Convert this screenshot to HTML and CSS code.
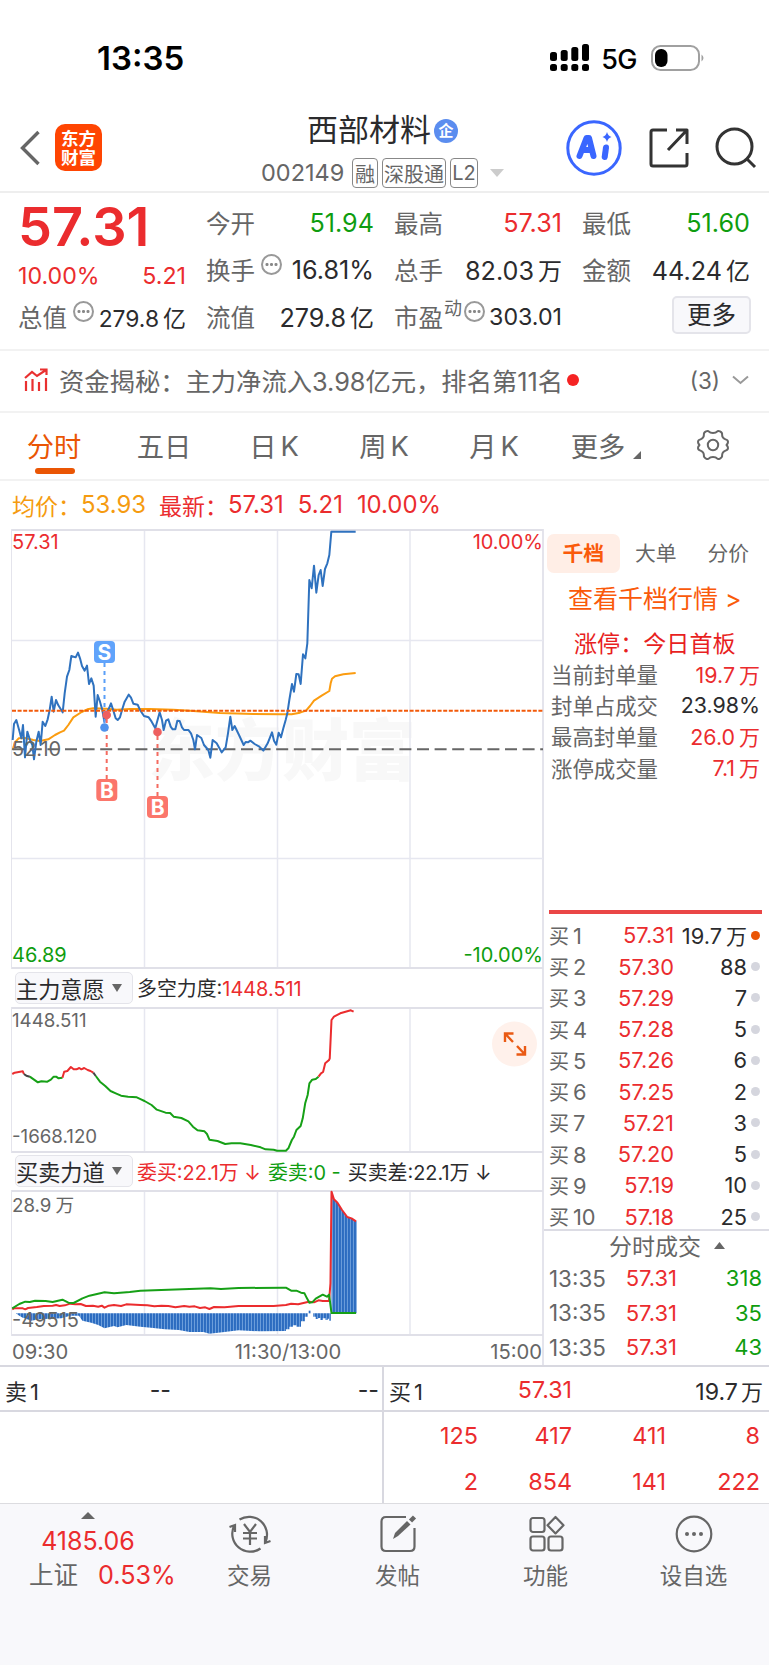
FILE: index.html
```html
<!DOCTYPE html>
<html lang="zh-CN">
<head>
    <meta charset="UTF-8">
    <meta name="viewport" content="width=device-width, initial-scale=1.0">
    <title>西部材料 002149</title>
    <link rel="stylesheet" href="styles.css">
</head>
<body>
    <div class="status-bar">
        <span class="time">13:35</span>
        <div class="status-icons">
            <svg class="signal" width="40" height="28" viewBox="0 0 40 28">
                <rect x="0" y="8" width="7" height="9" rx="2.5"/><rect x="10.7" y="6" width="7" height="11" rx="2.5"/>
                <rect x="21.3" y="3" width="7" height="14" rx="2.5"/><rect x="32" y="0" width="7" height="17" rx="2.5"/>
                <rect x="0" y="20" width="7" height="7" rx="2.5"/><rect x="10.7" y="20" width="7" height="7" rx="2.5"/>
                <rect x="21.3" y="20" width="7" height="7" rx="2.5"/><rect x="32" y="20" width="7" height="7" rx="2.5"/>
            </svg>
            <span class="network">5G</span>
            <svg width="54" height="26" viewBox="0 0 54 26">
                <rect x="1" y="1" width="47" height="24" rx="8.5" fill="none" stroke="#a0a0a0" stroke-width="2"/>
                <rect x="4" y="4" width="12.5" height="18" rx="6"/>
                <path d="M50.5 9.5q4 3.5 0 7z" fill="#a0a0a0"/>
            </svg>
        </div>
    </div>

    <header class="header">
        <svg class="back" width="20" height="36" viewBox="0 0 20 36"><path d="M18.500 2L2.500 18l16 16" fill="none" stroke="#666" stroke-width="3.400"/></svg>
        <div class="logo"><span>东方</span><span>财富</span></div>
        <div class="stock">
            <div class="stock-name">西部材料<span class="badge">企</span></div>
            <div class="stock-code">
                <span class="code">002149</span>
                <span class="tag">融</span><span class="tag tag-wide">深股通</span><span class="tag tag-l2">L2</span>
                <svg width="14" height="8" viewBox="0 0 14 8"><path d="M0 0h14L7 8z" fill="#ccc"/></svg>
            </div>
        </div>
        <div class="header-actions">
            <svg width="56" height="56" viewBox="0 0 56 56">
                <circle cx="28" cy="28" r="26.200" fill="none" stroke="#3a66ff" stroke-width="3"/>
                <g fill="none" stroke="#3a66ff" stroke-linecap="round" stroke-linejoin="round" stroke-width="6">
                    <path d="M13.500 36L20.500 18h2.500L27.500 36M17.500 30h8"/>
                    <path d="M40 27.500l-1.300 9.500"/>
                </g>
                <path d="M41 12q1 4 4.500 5Q42 18 41 22q-1-4-4.500-5Q40 16 41 12z" fill="#3a66ff"/>
            </svg>
            <svg class="share" width="40" height="40" viewBox="0 0 40 40" fill="none" stroke="#333" stroke-width="3" stroke-linejoin="round">
                <path d="M18 2H4Q2 2 2 4v32q0 2 2 2h32q2 0 2-2V25"/><path d="M27 2h11v14M38 2L19 22"/>
            </svg>
            <svg class="search" width="42" height="42" viewBox="0 0 42 42" fill="none" stroke="#333" stroke-width="3">
                <circle cx="19.500" cy="19.500" r="17.500"/><path d="M32 32l8 8"/>
            </svg>
        </div>
    </header>

    <section class="quote">
        <div class="quote-col">
            <div class="price red">57.31</div>
            <div class="cell small red"><span class="change">10.00%</span><span>5.21</span></div>
            <div class="cell small total"><label>总值</label><i class="info"></i><span class="value">279.8<b>亿</b></span></div>
        </div>
        <div class="quote-col">
            <div class="cell"><label>今开</label><span class="value green">51.94</span></div>
            <div class="cell"><label>换手</label><i class="info"></i><span class="value">16.81%</span></div>
            <div class="cell"><label>流值</label><span class="value">279.8<b>亿</b></span></div>
        </div>
        <div class="quote-col">
            <div class="cell"><label>最高</label><span class="value red">57.31</span></div>
            <div class="cell"><label>总手</label><span class="value">82.03<b>万</b></span></div>
            <div class="cell small pe"><label>市盈</label><sup>动</sup><i class="info"></i><span class="value">303.01</span></div>
        </div>
        <div class="quote-col">
            <div class="cell"><label>最低</label><span class="value green">51.60</span></div>
            <div class="cell"><label>金额</label><span class="value">44.24<b>亿</b></span></div>
            <div class="cell"><button class="more-btn">更多</button></div>
        </div>
    </section>

    <section class="news">
        <svg width="24" height="24" viewBox="0 0 24 24" fill="none" stroke="#e93030" stroke-width="2.200">
            <path d="M1 10L8 4l5 4 9-6M16 1.500h6.500V7M2 13v10M8.500 11v12M15 14v9M22 10v13"/>
        </svg>
        <span class="news-text">资金揭秘：主力净流入3.98亿元，排名第11名</span>
        <span class="red-dot"></span>
        <span class="news-count">(3)</span>
        <svg width="17" height="10" viewBox="0 0 17 10"><path d="M1 1.500l7.500 6.500L16 1.500" fill="none" stroke="#999" stroke-width="2"/></svg>
    </section>

    <nav class="tabs">
        <span class="tab active">分时</span>
        <span class="tab">五日</span>
        <span class="tab">日<em>K</em></span>
        <span class="tab">周<em>K</em></span>
        <span class="tab">月<em>K</em></span>
        <span class="tab tab-more">更多<svg width="8" height="8" viewBox="0 0 8 8"><path d="M8 0v8H0z" fill="#666"/></svg></span>
        <svg class="gear" width="34" height="32" viewBox="0 0 34 32" fill="none" stroke="#666" stroke-width="2" stroke-linejoin="round">
            <path d="M17 4Q20 4 21 2.600 22 1.400 24 2.400 26.400 3.600 26.100 5.500 26 9 29.500 10.400 32 11 32 13 32 14.500 30.500 16 32 17.500 32 19 32 21 29.500 21.600 26 23 26.100 26.500 26.400 28.400 24 29.600 22 30.600 21 29.400 20 28 17 28 14 28 13 29.400 12 30.600 10 29.600 7.600 28.400 7.900 26.500 8 23 4.500 21.600 2 21 2 19 2 17.500 3.500 16 2 14.500 2 13 2 11 4.500 10.400 8 9 7.900 5.500 7.600 3.600 10 2.400 12 1.400 13 2.600 14 4 17 4z"/>
            <circle cx="17" cy="16" r="5.200"/>
        </svg>
    </nav>

    <div class="legend">
        <span class="orange">均价：</span><span class="num orange avg">53.93</span>
        <span class="red">最新：</span><span class="num red last">57.31</span><span class="num red diff">5.21</span><span class="num red">10.00%</span>
    </div>

    <main class="board">
        <div class="charts">
            <svg class="chart" width="531" height="436" viewBox="0 2 531 436">
                <text class="watermark" x="136" y="246">东方财富</text>
                <path class="grid" d="M132.500 2v436M265.500 2v436M398 2v436M0 111.500h531M0 329.500h531"/>
                <g transform="translate(-12 -9) scale(.33333)">
                    <polyline class="line orange-line" points="38,690 44,668 56,655 75,654 100,660 120,663 145,658 165,645 180,637 192,632 205,615 220,592 245,576 262,568 280,565 320,566 350,569 390,567 450,567 520,569 570,572 610,575 660,579 760,582 840,583 875,583 900,578 918,572 930,558 942,542 965,527 988,513 992,490 996,476 1005,469 1030,463 1067,459"/>
                </g>
                <path d="M0.200 220.300H531" stroke="#666" stroke-width="2" stroke-dasharray="12 5.600"/>
                <g transform="translate(-12 -9) scale(.33333)">
                    <polyline class="line blue-line" points="38,660 42,612 49,600 58,632 64,655 69,615 75,712 82,635 90,660 97,675 102,718 109,665 116,635 122,675 128,605 136,618 143,598 149,570 155,530 161,575 168,540 175,556 188,577 194,520 201,470 208,450 214,408 227,412 234,398 240,415 246,438 254,452 261,437 267,492 274,475 281,497 287,590 293,525 300,545 307,570 313,605 320,577 327,565 333,550 341,575 347,595 353,600 360,592 367,567 374,545 386,524 393,533 400,551 413,554 420,570 432,588 446,592 455,605 466,625 479,577 486,600 491,630 498,602 505,598 512,620 518,628 526,628 532,602 539,603 546,622 552,630 565,630 573,640 580,660 585,688 591,645 604,654 612,675 625,690 631,713 638,660 650,670 665,697 677,682 684,640 691,590 697,630 704,618 717,645 731,675 737,666 744,667 751,662 764,672 778,680 790,692 803,670 816,637 822,662 829,674 836,638 843,652 850,625 857,600 862,580 868,540 876,492 882,515 889,462 896,463 902,492 909,403 916,415 922,370 928,180 935,205 942,137 949,218 956,165 962,150 968,198 975,147 982,130 988,105 994,35 1067,35"/>
                </g>
                <path d="M0 181.700h531" stroke="#f25a0a" stroke-width="2" stroke-dasharray="4 1.600"/>
                <!-- buy / sell markers -->
                <path d="M92.500 134v62" stroke="#5a9ff8" stroke-width="2" stroke-dasharray="4 4"/>
                <path d="M94.700 190v60M145.500 207v60" stroke="#f46b60" stroke-width="2" stroke-dasharray="4 4"/>
                <circle cx="92.500" cy="198.500" r="4.300" fill="#4f93ee"/>
                <circle cx="94.700" cy="186" r="4.300" fill="#ee5f5f"/>
                <circle cx="145.500" cy="203" r="4.300" fill="#ee5f5f"/>
                <rect x="82" y="112" width="21" height="22" rx="4" fill="#60a3fb"/>
                <rect x="84.300" y="250" width="21" height="22" rx="4" fill="#fb766b"/>
                <rect x="135" y="267" width="21" height="22" rx="4" fill="#fb766b"/>
                <text class="mark" x="92.500" y="130.500">S</text>
                <text class="mark" x="94.900" y="268.500">B</text>
                <text class="mark" x="145.600" y="285.500">B</text>
                <text class="label fill-red" x="0" y="20">57.31</text>
                <text class="label fill-red" x="531" y="20" text-anchor="end">10.00%</text>
                <text class="label" x="0" y="227">52.10</text>
                <text class="label fill-green" x="0" y="433">46.89</text>
                <text class="label fill-green" x="531" y="433" text-anchor="end">-10.00%</text>
            </svg>

            <div class="chart-bar">
                <button class="select">主力意愿<i></i></button>
                <span>多空力度:<span class="red">1448.511</span></span>
            </div>
            <svg class="chart" width="531" height="142" viewBox="0 2 531 142">
                <path class="grid" d="M132.500 2v142M265.500 2v142M398 2v142"/>
                <g transform="translate(-12 -67) scale(.3508 .33333)">
                    <polyline class="line red-line" points="35,402 42,398 65,394 68,402"/>
                    <polyline class="line dark-line" points="68,402 75,407 85,410"/>
                    <polyline class="line green-line" points="85,410 97,419 108,427 118,424 135,425 145,419 153,410 160,410 167,415 178,413"/>
                    <polyline class="line red-line" points="178,413 183,395 192,393 202,381 210,388 218,388 226,384 232,388 240,384 250,390 258,393 266,398"/>
                    <polyline class="line dark-line" points="266,398 273,408"/>
                    <polyline class="line green-line" points="273,408 285,425 300,438 315,453 330,460 345,467 365,470 390,472 402,478 412,483 432,495 447,509 472,518 485,519 495,530 517,534 537,544 550,560 563,571 583,574 590,582 597,599 620,603 642,612 660,610 685,610 715,615 743,622 757,628 780,629 790,632 815,632 822,625 832,600 838,590 845,570 857,558 863,535 870,490 877,465 882,430 890,419 900,417 908,410"/>
                    <polyline class="line red-line" points="908,410 915,400 921,396 927,370 938,360 940,355 945,240 952,230 970,220 1000,211 1008,215"/>
                </g>
                <text class="label sub" x="0" y="20">1448.511</text>
                <text class="label sub" x="0" y="135.500">-1668.120</text>
                <circle cx="502.500" cy="37" r="22.500" fill="#fff1eb"/>
                <path d="M493 35v-8.500h8.500M493 26.500l8 8.500M513 39v8.500h-8.500M513 47.500l-8-8.500" fill="none" stroke="#ea5a14" stroke-width="2.400"/>
            </svg>

            <div class="chart-bar second">
                <button class="select">买卖力道<i></i></button>
                <span class="power"><span class="red">委买:22.1万 ↓</span><span class="green">委卖:0 -</span><span>买卖差:22.1万 ↓</span></span>
            </div>
            <svg class="chart" width="531" height="142" viewBox="0 2 531 142">
                <defs>
                    <pattern id="bars" width="8.550" height="10" patternUnits="userSpaceOnUse">
                        <rect width="8.550" height="10" fill="#6fa0dc"/><rect width="5.700" height="10" fill="#2c6cc0"/>
                    </pattern>
                </defs>
                <path class="grid" d="M132.500 2v142M265.500 2v142M398 2v142"/>
                <g transform="translate(-12 -40) scale(.3508 .33333)">
                    <path fill="url(#bars)" d="M45 490L55 497 65 503 90 512 110 508 175 505 200 497 225 497 235 512 260 518 280 525 298 535 325 528 335 532 360 525 400 530 430 533 470 538 510 540 540 546 580 546 597 551 640 546 680 541 740 544 815 543V538h10V530h10V526h10V530h13V514h11V500h8V490zM893 490V500h7V507h7V504h6V510h7V505h8V510h6V506h4V512h5V490z"/>
                    <path fill="url(#bars)" d="M945 490V135L952 148 962 158 975 180 990 201 1002 205 1017 214V490z"/>
                    <rect x="880" y="482" width="5" height="8" fill="#2c6cc0"/>
                    <polyline class="line red-line" points="35,478 40,475 65,475 72,478 80,474 105,471 125,468 150,467 160,465 170,468 185,466 200,461 215,463 230,462 245,468 265,467 280,470 290,467 298,473 310,467 325,465 345,468 360,463 400,465 420,466 440,469 460,467 480,468 500,472 525,468 540,470 555,469 570,474 585,472 597,477 610,471 640,472 680,468 780,468 815,465 830,461 850,463 880,455 895,457 908,451 920,453 938,453 942,400 945,125 952,148 962,158 975,180 990,201 1002,205 1015,214"/>
                    <polyline class="line green-line" points="35,475 55,462 72,455 85,456 100,452 130,453 150,456 178,449 195,458 210,459 235,445 255,437 298,427 325,430 370,426 400,422 480,419 600,415 630,417 680,414 805,413 815,413 830,422 845,422 858,428 868,430 875,445 882,458 890,457 900,446 920,434 932,440 938,434 945,489 1015,489"/>
                </g>
                <text class="label sub" x="0" y="22">28.9<tspan dx="4">万</tspan></text>
                <text class="label" x="0" y="137">-49515</text>
            </svg>
            <div class="time-axis"><span>09:30</span><span class="noon">11:30/13:00</span><span>15:00</span></div>
        </div>

        <aside class="depth">
            <div class="depth-tabs"><span class="active">千档</span><span>大单</span><span>分价</span></div>
            <a class="depth-link">查看千档行情 &gt;</a>
            <div class="limit-title">涨停：今日首板</div>
            <ul class="limit-list">
                <li><label>当前封单量</label><span class="red">19.7<b>万</b></span></li>
                <li><label>封单占成交</label><span>23.98%</span></li>
                <li><label>最高封单量</label><span class="red">26.0<b>万</b></span></li>
                <li><label>涨停成交量</label><span class="red">7.1<b>万</b></span></li>
            </ul>
            <div class="bids">
                <div class="bid first"><label>买<b>1</b></label><span class="red">57.31</span><span>19.7<b>万</b></span><i></i></div>
                <div class="bid"><label>买<b>2</b></label><span class="red">57.30</span><span>88</span><i></i></div>
                <div class="bid"><label>买<b>3</b></label><span class="red">57.29</span><span>7</span><i></i></div>
                <div class="bid"><label>买<b>4</b></label><span class="red">57.28</span><span>5</span><i></i></div>
                <div class="bid"><label>买<b>5</b></label><span class="red">57.26</span><span>6</span><i></i></div>
                <div class="bid"><label>买<b>6</b></label><span class="red">57.25</span><span>2</span><i></i></div>
                <div class="bid"><label>买<b>7</b></label><span class="red">57.21</span><span>3</span><i></i></div>
                <div class="bid"><label>买<b>8</b></label><span class="red">57.20</span><span>5</span><i></i></div>
                <div class="bid"><label>买<b>9</b></label><span class="red">57.19</span><span>10</span><i></i></div>
                <div class="bid"><label>买<b>10</b></label><span class="red">57.18</span><span>25</span><i></i></div>
            </div>
            <div class="trades">
                <div class="trades-title">分时成交<svg width="11" height="7" viewBox="0 0 11 7"><path d="M0 7h11L5.500 0z" fill="#666"/></svg></div>
                <div class="trade"><label>13:35</label><span class="red">57.31</span><span class="green">318</span></div>
                <div class="trade"><label>13:35</label><span class="red">57.31</span><span class="green">35</span></div>
                <div class="trade"><label>13:35</label><span class="red">57.31</span><span class="green">43</span></div>
            </div>
        </aside>
    </main>

    <section class="orders">
        <div class="side">
            <div class="side-head"><span>卖<b>1</b></span><span class="dash">--</span><span>--</span></div>
        </div>
        <div class="side buy">
            <div class="side-head"><span>买<b>1</b></span><span class="red">57.31</span><span>19.7<b>万</b></span></div>
            <div class="queue red">
                <span>125</span><span>417</span><span>411</span><span>8</span>
                <span>2</span><span>854</span><span>141</span><span>222</span>
            </div>
        </div>
    </section>

    <footer class="bottom-nav">
        <div class="index">
            <svg width="14" height="7" viewBox="0 0 14 7"><path d="M0 7h14L7 0z" fill="#666"/></svg>
            <div class="index-value red">4185.06</div>
            <div class="index-name"><span>上证</span><span class="red">0.53%</span></div>
        </div>
        <div class="nav-item">
            <svg width="44" height="40" viewBox="0 0 44 40" fill="none" stroke="#666" stroke-width="2.200">
                <path d="M11.500 5.500A18 18 0 0 1 37.500 28M32.500 34.500A18 18 0 0 1 6 12M1.500 13L7 11v7M42.500 27L37 29v-7"/>
                <path d="M16 10l6 8 6-8M15 19h14M15 24.500h14M22 18v13"/>
            </svg>
            <span>交易</span>
        </div>
        <div class="nav-item">
            <svg width="44" height="40" viewBox="0 0 44 40" fill="none" stroke="#666" stroke-width="2.200">
                <path d="M30 3H10q-4.500 0-4.500 4.500v25Q5.500 37 10 37h24q4.500 0 4.500-4.500V14"/>
                <path d="M17 25l2-6L31 7l3.500 3.500L22 22z" fill="#666" stroke="none"/><path d="M34.500 7l4-4" stroke-width="4.500"/>
            </svg>
            <span>发帖</span>
        </div>
        <div class="nav-item">
            <svg width="44" height="40" viewBox="0 0 44 40" fill="none" stroke="#666" stroke-width="2.200">
                <rect x="6.500" y="4" width="14" height="14" rx="2.500"/><rect x="6.500" y="22.500" width="14" height="14" rx="2.500"/>
                <rect x="24.500" y="22.500" width="14" height="14" rx="2.500"/><path d="M31.500 3l8 8.200-8 8.200-8-8.200z" stroke-linejoin="round"/>
            </svg>
            <span>功能</span>
        </div>
        <div class="nav-item">
            <svg width="44" height="40" viewBox="0 0 44 40" fill="none" stroke="#666" stroke-width="2.200">
                <circle cx="22" cy="20" r="17.300"/>
                <g fill="#666" stroke="none"><circle cx="15" cy="20" r="2"/><circle cx="22" cy="20" r="2"/><circle cx="29" cy="20" r="2"/></g>
            </svg>
            <span>设自选</span>
        </div>
    </footer>
</body>
</html>
```
FILE: styles.css
```css
* {
    box-sizing: border-box;
}
body {
    margin: 0;
    width: 769px;
    height: 1665px;
    overflow: hidden;
    background-color: #fff;
    color: #2b2b2d;
    font-family: Inter, "Noto Sans CJK SC", sans-serif;
    font-size: 22px;
    white-space: nowrap;
}
b, i, em {
    font-weight: normal;
    font-style: normal;
}
button {
    font-family: inherit;
    color: #2b2b2d;
    background-color: #f8f8fb;
    border: 2px solid #e4e4ea;
    border-radius: 5px;
    padding: 0;
}
svg {
    display: block;
    flex-shrink: 0;
}
label {
    color: #666;
}
.red {
    color: #eb2c2e;
}
.green {
    color: #0f9d0f;
}
.orange {
    color: #f59b10;
}

/* status bar */
.status-bar {
    height: 96px;
    padding: 19px 64px 0 97px;
    display: flex;
    align-items: center;
    justify-content: space-between;
    color: #000;
}
.time {
    font-size: 33px;
    font-weight: 600;
}
.status-icons {
    display: flex;
    align-items: center;
}
.network {
    font-size: 27px;
    font-weight: 500;
    letter-spacing: -0.5px;
    margin: 3px 14px 0 11px;
}

/* header */
.header {
    height: 97px;
    border-bottom: 2px solid #eee;
    display: flex;
    align-items: flex-start;
    padding-left: 20px;
}
.back {
    margin-top: 34px;
}
.logo {
    width: 47px;
    height: 47px;
    margin: 28px 0 0 15px;
    background-color: #ff4502;
    border-radius: 10px;
    color: #fff;
    font-size: 17.5px;
    font-weight: 700;
    line-height: 19px;
    display: flex;
    flex-direction: column;
    align-items: center;
    justify-content: center;
}
.stock {
    margin-left: 159px;
    width: 245px;
}
.stock-name {
    height: 62px;
    padding: 6px 0 0 46px;
    display: flex;
    align-items: center;
    font-size: 31px;
    line-height: 40px;
}
.badge {
    width: 24px;
    height: 24px;
    margin: 2px 0 0 3px;
    border-radius: 50%;
    background-color: #5b8def;
    color: #fff;
    font-size: 15px;
    font-weight: 700;
    display: flex;
    align-items: center;
    justify-content: center;
}
.stock-code {
    height: 30px;
    display: flex;
    align-items: center;
    color: #666;
}
.code {
    width: 91px;
    padding-bottom: 2px;
    font-size: 23.5px;
}
.tag {
    width: 26px;
    height: 30px;
    border: 1.5px solid #888;
    border-radius: 4px;
    margin-right: 4px;
    font-size: 20px;
    display: flex;
    align-items: center;
    justify-content: center;
}
.tag-wide {
    width: 64px;
}
.tag-l2 {
    width: 28px;
    margin-right: 12px;
}
.header-actions {
    display: flex;
    margin: 24px 0 0 60px;
}
.share {
    margin: 8px 0 0 27px;
}
.search {
    margin: 7px 0 0 26px;
}

/* quote */
.quote {
    height: 156px;
    padding: 6px 19px 0 18px;
    display: grid;
    grid-template-columns: repeat(4, 168px);
    column-gap: 20px;
}
.cell {
    height: 47px;
    display: flex;
    align-items: center;
    justify-content: space-between;
    font-size: 24.5px;
}
.cell label {
    font-size: 24.5px;
}
.cell .value {
    font-size: 25.2px;
}
.cell b {
    margin-left: 4px;
    font-size: 24px;
}
.small {
    font-size: 23.2px;
}
.price {
    height: 56px;
    line-height: 56px;
    font-size: 54px;
    font-weight: 600;
}
.price + .cell {
    height: 38px;
    padding-top: 3px;
}
.info {
    width: 21px;
    height: 21px;
    border: 2px solid #999;
    border-radius: 50%;
    margin: -10px 0 0 6px;
    display: flex;
    align-items: center;
    justify-content: center;
}
.info::before {
    content: "";
    width: 2.5px;
    height: 2.5px;
    border-radius: 50%;
    background-color: #888;
    box-shadow: -4.5px 0 #888, 4.5px 0 #888;
}
.info + .value {
    margin-left: auto;
}
.small .value {
    font-size: 23.2px;
}
.total .value {
    font-size: 22.8px;
}
.total b {
    font-size: 23px;
}
.pe sup {
    font-size: 18px;
    color: #666;
    line-height: 18px;
    margin: -16px 0 0 1px;
}
.pe .info {
    margin-left: 2px;
}
.more-btn {
    width: 79px;
    height: 38px;
    margin: -4px -1px 0 auto;
    font-size: 24.5px;
    line-height: 32px;
}

/* news */
.news {
    height: 64px;
    border-top: 2px solid #f2f2f2;
    border-bottom: 2px solid #f2f2f2;
    display: flex;
    align-items: center;
    padding: 0 20px 2px 24px;
    color: #666;
    font-size: 25.3px;
}
.news-text {
    margin-left: 11px;
    width: 502px;
}
.red-dot {
    width: 12px;
    height: 12px;
    margin-left: 6px;
    border-radius: 50%;
    background-color: #f52323;
}
.news-count {
    font-size: 22.5px;
    margin: 0 12px 0 auto;
}

/* period tabs */
.tabs {
    height: 68px;
    border-bottom: 2px solid #f2f2f2;
    display: flex;
    align-items: center;
    color: #666;
    font-size: 27.3px;
}
.tab {
    width: 110px;
    height: 66px;
    padding: 0 2px 3px 0;
    display: flex;
    align-items: center;
    justify-content: center;
}
.tab em {
    margin: 3px 0 0 4px;
}
.tab.active {
    color: #ea5504;
    position: relative;
}
.tab.active::after {
    content: "";
    position: absolute;
    left: 35px;
    bottom: 5px;
    width: 40px;
    height: 6px;
    border-radius: 3px;
    background-color: #ea5504;
}
.tab-more {
    width: 114px;
}
.tab-more svg {
    margin: 21px 0 0 8px;
}
.gear {
    margin: -2px 0 0 32px;
}

/* legend */
.legend {
    height: 48px;
    padding: 1px 0 2px 12px;
    display: flex;
    align-items: center;
    font-size: 23px;
}
.num {
    font-size: 23.9px;
}
.avg {
    margin-right: 13px;
}
.last, .diff {
    margin-right: 14px;
}

/* charts */
.board {
    display: flex;
    height: 836px;
}
.charts {
    width: 544px;
    padding-left: 12px;
    border-right: 2px solid #e4e4ec;
}
.chart {
    box-sizing: content-box;
    border: solid #e0e0e8;
    border-width: 2px 0;
    box-shadow: -1px 0 #e4e4ec;
    overflow: visible;
}
.grid {
    stroke: #e6e7f0;
    stroke-width: 1.5;
    fill: none;
}
.watermark {
    font-size: 67px;
    font-weight: 900;
    fill: #f8f8f8;
}
.line {
    fill: none;
    stroke-width: 2;
    stroke-linejoin: round;
    vector-effect: non-scaling-stroke;
}
.blue-line {
    stroke: #2f72bf;
}
.orange-line {
    stroke: #fb9c10;
}
.red-line {
    stroke: #eb2c2e;
}
.green-line {
    stroke: #16a016;
}
.dark-line {
    stroke: #444;
}
.label {
    font-size: 20px;
    fill: #666;
}
.sub {
    font-size: 18.7px;
}
.fill-red {
    fill: #eb2c2e;
}
.fill-green {
    fill: #0f9d0f;
}
.mark {
    font-size: 21px;
    font-weight: 700;
    fill: #fff;
    text-anchor: middle;
}
.chart-bar {
    height: 38px;
    padding: 0 0 1px 3px;
    display: flex;
    align-items: center;
    font-size: 19.9px;
}
.second {
    height: 37px;
}
.power {
    display: flex;
    gap: 7px;
    font-size: 19.9px;
}
.select {
    width: 118px;
    height: 32px;
    margin-right: 4px;
    border-width: 1.5px;
    display: flex;
    align-items: center;
    font-size: 22.2px;
}
.select i {
    margin-left: 7px;
    border: 5px solid transparent;
    border-top: 8px solid #666;
    border-bottom: 0;
}
.time-axis {
    height: 29px;
    padding-top: 1px;
    display: grid;
    grid-template-columns: 1fr 2fr 1fr;
    align-items: center;
    color: #666;
    font-size: 20.2px;
}
.noon {
    text-align: center;
    padding-left: 22px;
}
.time-axis span:last-child {
    text-align: right;
}

/* depth panel */
.depth {
    flex: 1;
    padding-top: 5px;
}
.depth-tabs {
    display: flex;
    margin: 0 4px 0 3px;
}
.depth-tabs span {
    width: 72.5px;
    height: 39px;
    padding-bottom: 3px;
    display: flex;
    align-items: center;
    justify-content: center;
    font-size: 20.8px;
    color: #666;
}
.depth-tabs .active {
    background-color: #ffeee6;
    border-radius: 7px;
    color: #fa5a0a;
    font-weight: 700;
}
.depth-link {
    display: block;
    height: 51px;
    line-height: 53px;
    padding-left: 24px;
    color: #fa5a0a;
    font-size: 25px;
}
.limit-title {
    height: 39px;
    line-height: 41px;
    padding-left: 30px;
    color: #e81f22;
    font-size: 23.1px;
}
.limit-list {
    list-style: none;
    margin: -5px 9px 0 7px;
    padding: 0;
}
.limit-list li {
    height: 31.2px;
    display: flex;
    align-items: center;
    justify-content: space-between;
    font-size: 21.4px;
}
.depth b {
    margin-left: 4px;
    font-size: 21px;
}
.bids {
    margin: 127px 7px 0 5px;
    border-top: 4px solid #ea4646;
    padding-top: 6px;
}
.bid {
    height: 31.25px;
    display: flex;
    align-items: center;
    font-size: 21.8px;
}
.bid label {
    width: 51px;
    font-size: 20px;
}
.bid label b {
    font-size: 21.8px;
}
.bid .red {
    width: 74px;
    text-align: right;
}
.bid span:nth-child(3) {
    width: 73px;
    text-align: right;
}
.bid i {
    width: 9px;
    height: 9px;
    margin-left: 4px;
    border-radius: 50%;
    background-color: #d5d6de;
}
.bid.first i {
    background-color: #ea5504;
}
.trades {
    margin-top: -3px;
    border-top: 2px solid #dcdce4;
    padding: 0 7px 0 5px;
}
.trades-title {
    height: 30px;
    padding: 0 0 3px 60px;
    display: flex;
    align-items: center;
    color: #666;
    font-size: 23px;
}
.trades-title svg {
    margin: 2px 0 0 13px;
}
.trade {
    height: 34.4px;
    display: flex;
    align-items: center;
    font-size: 22px;
}
.trade label {
    width: 60px;
    font-size: 22.4px;
}
.trade .red {
    width: 68px;
    text-align: right;
}
.trade .green {
    margin-left: auto;
}

/* orders */
.orders {
    height: 138px;
    display: flex;
    border-top: 2px solid #d8d8e0;
}
.side {
    width: 382px;
}
.buy {
    width: 387px;
    border-left: 2px solid #d8d8e0;
}
.side-head {
    height: 45px;
    border-bottom: 2px solid #d8d8e0;
    padding: 2px 6px 0 5px;
    display: grid;
    grid-template-columns: 100px 83px 1fr;
    align-items: center;
    font-size: 23.2px;
}
.side-head span:first-child {
    font-size: 22px;
}
.side-head span:not(:first-child) {
    text-align: right;
}
.side-head .dash {
    padding-right: 17px;
}
.side-head .dash + span {
    margin-right: -3px;
}
.side-head b {
    margin-left: 3px;
    font-size: 22px;
}
.queue {
    display: grid;
    grid-template-columns: 94px 94px 94px 94px;
    grid-auto-rows: 45.5px;
    align-items: center;
    text-align: right;
    padding-top: 1px;
    font-size: 23.4px;
}

/* bottom nav */
.bottom-nav {
    height: 162px;
    background-color: #f8f8fb;
    border-top: 1px solid #dcdce0;
    display: flex;
    color: #666;
}
.index {
    width: 176px;
    padding-top: 8px;
    display: flex;
    flex-direction: column;
    align-items: center;
}
.index-value {
    height: 38px;
    line-height: 44px;
    font-size: 25px;
}
.index-name {
    width: 100%;
    padding-left: 29px;
    line-height: 36px;
    font-size: 24.5px;
}
.index-name .red {
    font-size: 25.2px;
    margin-left: 20px;
}
.nav-item {
    width: 148px;
    padding: 10px 1px 0 0;
    display: flex;
    flex-direction: column;
    align-items: center;
    font-size: 22.5px;
    line-height: 44px;
}
```
